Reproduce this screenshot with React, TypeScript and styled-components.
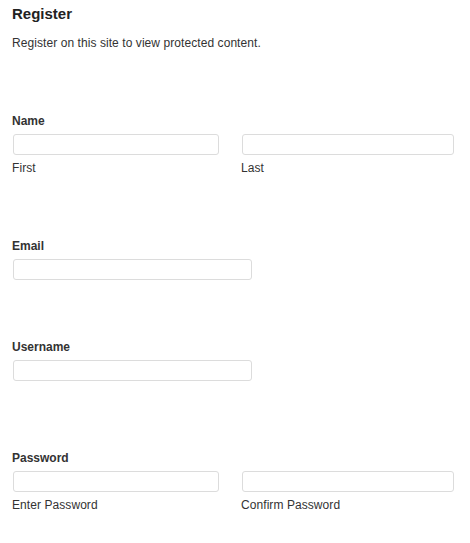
import React from 'react'
import styled, { createGlobalStyle } from 'styled-components'

const GlobalStyle = createGlobalStyle`
  html, body {
    margin: 0;
    padding: 0;
    background: #fff;
  }
  body {
    font-family: "Liberation Sans", Arial, sans-serif;
    color: #333;
  }
`

const App = () => {
  return (
    <Page>
      <GlobalStyle />
      <Title>Register</Title>
      <Intro>Register on this site to view protected content.</Intro>

      <Field $top={64}>
        <Label>Name</Label>
        <Pair>
          <Column>
            <Input type="text" $width={206} />
            <Sub>First</Sub>
          </Column>
          <Column>
            <Input type="text" $width={212} />
            <Sub>Last</Sub>
          </Column>
        </Pair>
      </Field>

      <Field $top={64}>
        <Label>Email</Label>
        <Input type="email" $width={239} />
      </Field>

      <Field $top={60}>
        <Label>Username</Label>
        <Input type="text" $width={239} />
      </Field>

      <Field $top={70}>
        <Label>Password</Label>
        <Pair>
          <Column>
            <Input type="password" $width={206} />
            <Sub>Enter Password</Sub>
          </Column>
          <Column>
            <Input type="password" $width={212} />
            <Sub>Confirm Password</Sub>
          </Column>
        </Pair>
      </Field>
    </Page>
  )
}

export default App

const Page = styled.div`
  width: 470px;
  min-height: 543px;
  box-sizing: border-box;
  padding: 5px 12px 20px 12px;
`

const Title = styled.h2`
  margin: 0;
  font-size: 15px;
  line-height: 17px;
  font-weight: bold;
  color: #222;
`

const Intro = styled.p`
  margin: 14px 0 0 0;
  font-size: 12px;
  line-height: 14px;
  letter-spacing: 0.07px;
  color: #333;
`

const Field = styled.div<{ $top: number }>`
  margin-top: ${(p) => p.$top}px;
  display: flex;
  flex-direction: column;
  align-items: flex-start;
`

const Label = styled.label`
  font-size: 12px;
  line-height: 14px;
  font-weight: bold;
  color: #333;
  margin-bottom: 6px;
`

const Pair = styled.div`
  display: grid;
  grid-template-columns: 229px 216px;
`

const Column = styled.div`
  display: flex;
  flex-direction: column;
  align-items: flex-start;
`

const Input = styled.input<{ $width: number }>`
  box-sizing: border-box;
  width: ${(p) => p.$width}px;
  height: 21px;
  margin: 0 0 0 1px;
  padding: 2px 4px;
  border: 1px solid #dcdcdc;
  border-radius: 3px;
  background: #fff;
  outline: none;
  font-family: "Liberation Sans", Arial, sans-serif;
  font-size: 12px;
`

const Sub = styled.span`
  margin-top: 6px;
  font-size: 12px;
  line-height: 14px;
  letter-spacing: 0.07px;
  color: #333;
`
